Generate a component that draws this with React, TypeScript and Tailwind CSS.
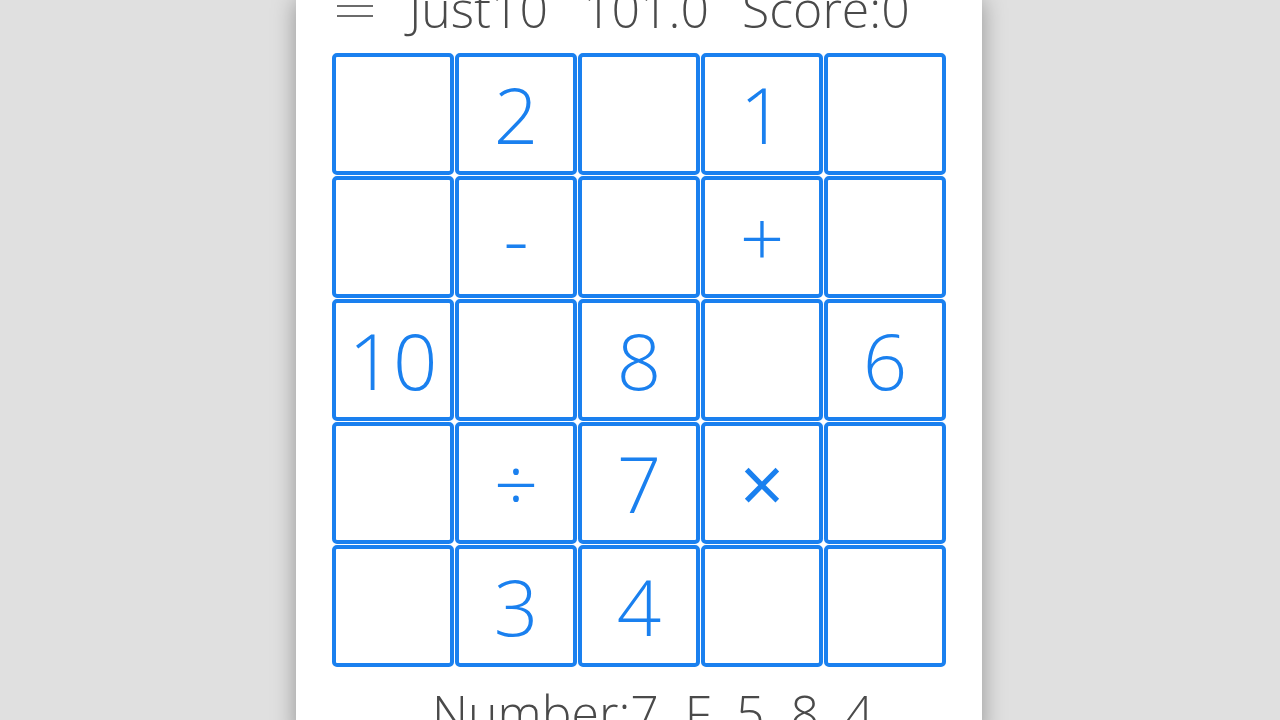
import React from "react";

const cells: string[] = [
  "", "2", "", "1", "",
  "", "-", "", "+", "",
  "10", "", "8", "", "6",
  "", "÷", "7", "×", "",
  "", "3", "4", "", "",
];

function Menu() {
  return (
    <svg width="36" height="30" viewBox="0 0 36 30" className="-mt-[10px] shrink-0">
      <rect x="0" y="5" width="36" height="2" fill="#6b6b6b" />
      <rect x="0" y="15" width="36" height="2" fill="#6b6b6b" />
      <rect x="0" y="25" width="36" height="2" fill="#6b6b6b" />
    </svg>
  );
}

export default function App() {
  return (
    <div className="min-h-screen overflow-hidden bg-[#e0e0e0] font-['Open_Sans',sans-serif]">
      <div className="ml-[296px] min-h-[720px] w-[686px] bg-white shadow-[0_0_22px_rgba(0,0,0,0.35)]">
        {/* header, scrolled partly out of view */}
        <div className="flex h-[53px] items-start pl-[41px]">
          <Menu />
          <div className="-mt-[16px] ml-[36px] flex text-[50px] font-light leading-none text-[#4a4a4a]">
            <span>Just10</span>
            <span className="ml-[35px]">101.0</span>
            <span className="ml-[33px]">Score:0</span>
          </div>
        </div>

        <div className="ml-[36px] grid w-[614px] grid-cols-5 gap-[1px]">
          {cells.map((c, i) => (
            <div
              key={i}
              className={
                "flex h-[122px] items-center justify-center rounded-[5px] border-[4px] border-[#1a80ef] text-[78px] leading-none text-[#1a80ef] " +
                (c === "×" ? "font-normal" : "font-light")
              }
            >
              {c}
            </div>
          ))}
        </div>

        <div className="mt-[21px] pl-[136px] text-[50px] font-light leading-none text-[#4a4a4a]">
          Number:7&nbsp; F&nbsp; 5&nbsp; 8&nbsp; 4
        </div>
      </div>
    </div>
  );
}
